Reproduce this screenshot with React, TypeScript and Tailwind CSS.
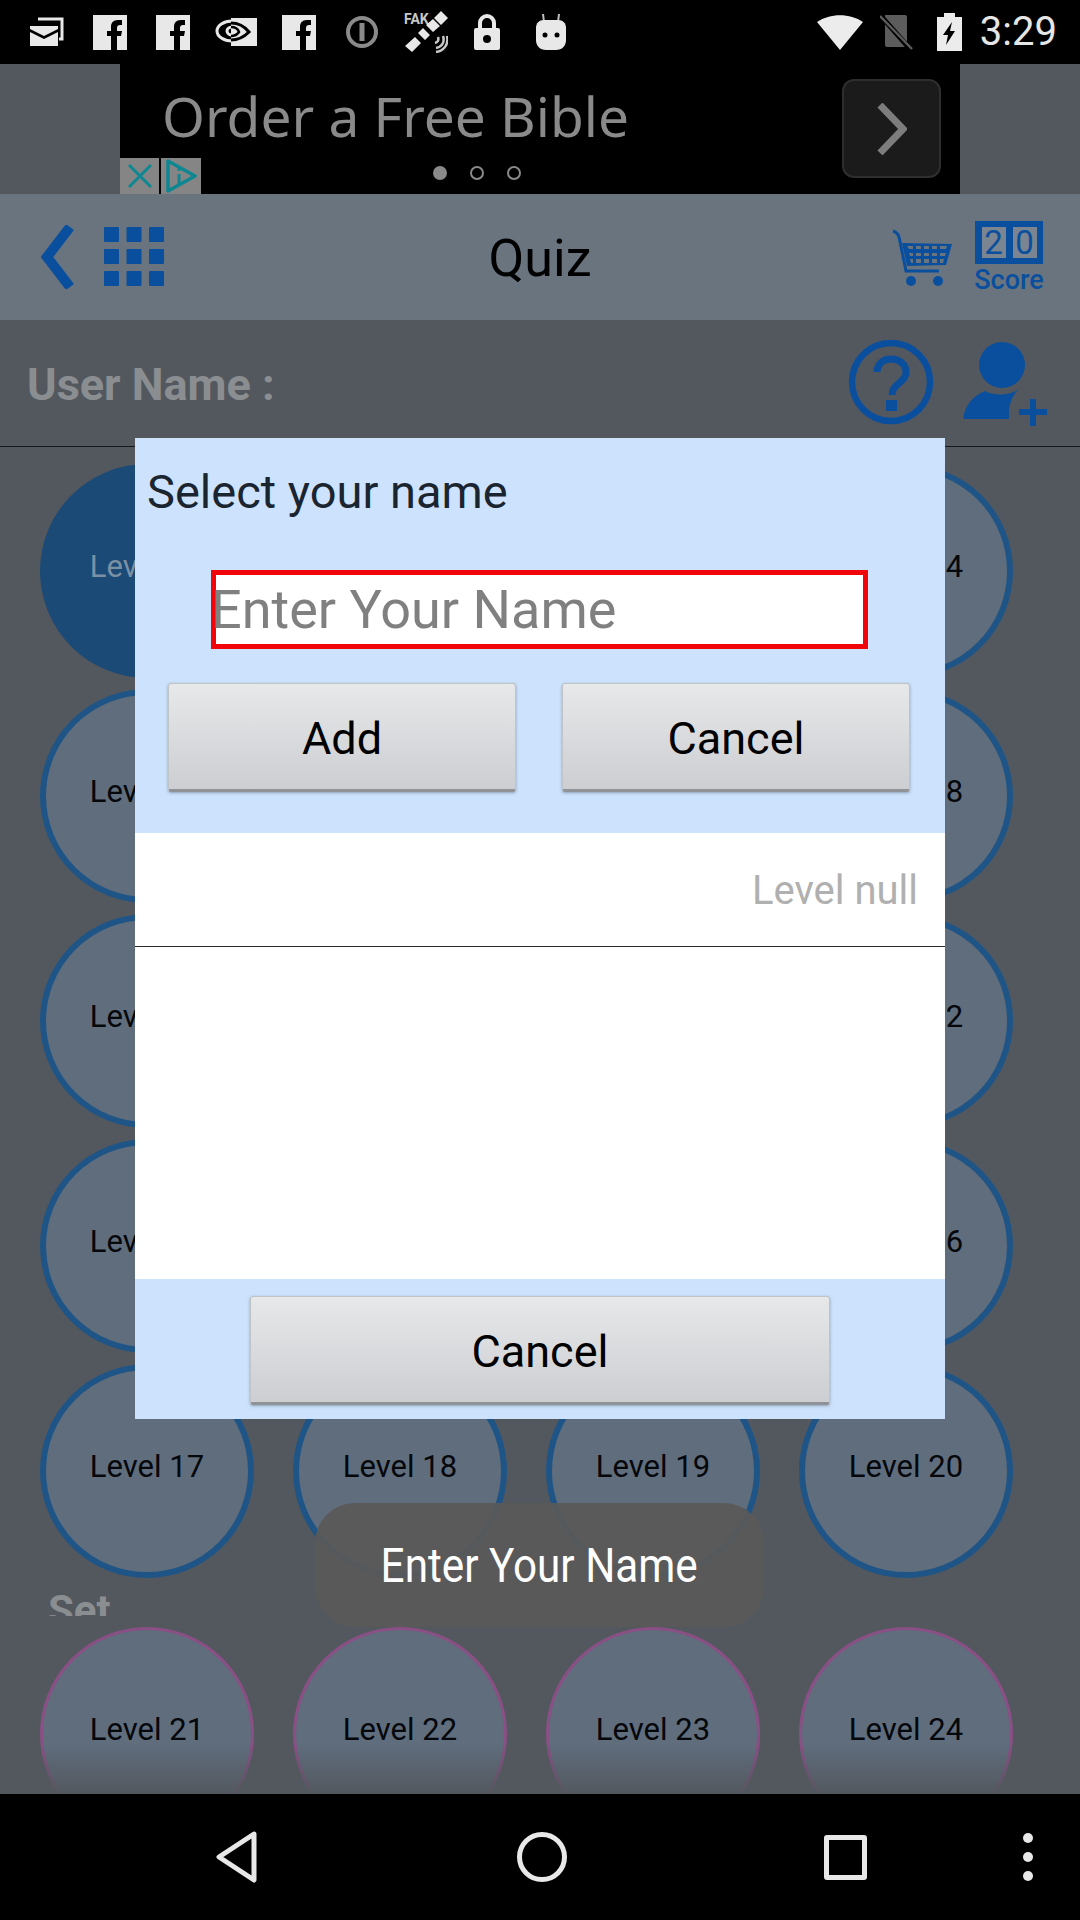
const LEVELS = [
  [1, 2, 3, 4],
  [5, 6, 7, 8],
  [9, 10, 11, 12],
  [13, 14, 15, 16],
  [17, 18, 19, 20],
];
const LAST_SET = [21, 22, 23, 24];

function Fb() {
  return (
    <svg width="34" height="35" viewBox="0 0 34 35">
      <path fill="#e8e8e8" fillRule="evenodd" d="M0 0h34v35H0zM24 35V21h4l1-5h-5v-3c0-2 1-3 3-3h2V5h-4c-5 0-7 3-7 7v4h-4v5h4v14z" />
    </svg>
  );
}

function StatusLeft() {
  return (
    <div className="flex items-center h-16 pl-[30px]">
      <svg width="34" height="30" viewBox="0 0 34 30" className="mt-[-2px]">
        <path fill="none" stroke="#e8e8e8" strokeWidth="3" d="M8 3h24v20h-3" />
        <path fill="#e8e8e8" d="M0 10h28v3L14 20 0 13zM0 16l14 7 14-7v14H0z" />
      </svg>
      <div className="ml-[29px] flex"><Fb /></div>
      <div className="ml-[29px] flex"><Fb /></div>
      <svg width="42" height="28" viewBox="0 0 42 28" className="ml-[25px]">
        <path fill="#e8e8e8" d="M16 0h26v28H16z" />
        <ellipse cx="17" cy="13" rx="15" ry="10" fill="none" stroke="#e8e8e8" strokeWidth="3" />
        <path fill="none" stroke="#000" strokeWidth="3" d="M16 5c8 0 14 4 18 9-4 4-10 8-18 8" />
        <ellipse cx="17" cy="13" rx="5" ry="4" fill="none" stroke="#e8e8e8" strokeWidth="3" />
        <path fill="none" stroke="#000" strokeWidth="2.5" d="M16 9c4 0 7 2 8 5-2 3-5 4-8 4" />
      </svg>
      <div className="ml-[25px] flex"><Fb /></div>
      <svg width="32" height="32" viewBox="0 0 32 32" className="ml-[30px]">
        <circle cx="16" cy="16" r="14" fill="none" stroke="#8a8a8a" strokeWidth="4" />
        <rect x="13.5" y="7" width="5" height="18" fill="#8a8a8a" />
      </svg>
      <svg width="44" height="42" viewBox="0 0 44 42" className="ml-[26px]">
        <text x="0" y="13" fontSize="14" fontWeight="700" fill="#c8c8c8" fontFamily="Roboto, sans-serif">FAK</text>
        <path fill="#e8e8e8" d="M37 0l7 7-7 7-7-7zM22 14l7-6 7 7-7 6zM19 17l7 7-5 5-7-7zM11 26l6 6-9 9-7-6z" />
        <path fill="none" stroke="#c8c8c8" strokeWidth="2.5" d="M34 26c1 3 0 5-3 6M39 25c2 6-1 11-7 12M43 25c2 8-3 15-11 16" />
      </svg>
      <svg width="26" height="36" viewBox="0 0 26 36" className="ml-[26px]">
        <path fill="none" stroke="#e8e8e8" strokeWidth="4" d="M6 15V9a7 7 0 0 1 14 0v6" />
        <path fill="#e8e8e8" fillRule="evenodd" d="M2 14h22a2 2 0 0 1 2 2v18a2 2 0 0 1-2 2H2a2 2 0 0 1-2-2V16a2 2 0 0 1 2-2zm11 7a4 4 0 1 0 0 8 4 4 0 0 0 0-8z" />
      </svg>
      <svg width="30" height="36" viewBox="0 0 30 36" className="ml-[36px]">
        <path stroke="#bdbdbd" strokeWidth="2" d="M7 0l1 8M23 0l-1 8" />
        <path fill="#e8e8e8" d="M8 6h14c5 0 8 3 8 8v12c0 6-4 10-10 10h-10C4 36 0 32 0 26V14c0-5 3-8 8-8z" />
        <circle cx="9" cy="21" r="2.5" fill="#000" />
        <circle cx="21" cy="21" r="2.5" fill="#000" />
      </svg>
    </div>
  );
}

function StatusRight() {
  return (
    <div className="flex items-center h-16 pr-[23px]">
      <svg width="46" height="35" viewBox="0 0 46 35">
        <path fill="#ececec" d="M0 7C13-2 33-2 46 7L23 35z" />
      </svg>
      <svg width="33" height="36" viewBox="0 0 33 36" className="ml-[17px]">
        <path fill="#5c5c5c" d="M5 1h20a2 2 0 0 1 2 2v28a2 2 0 0 1-2 2H7a2 2 0 0 1-2-2z" />
        <path stroke="#000" strokeWidth="5" d="M0 1l30 34" />
        <path stroke="#5c5c5c" strokeWidth="2.5" d="M0 2l32 33" />
      </svg>
      <svg width="25" height="38" viewBox="0 0 25 38" className="ml-[24px]">
        <path fill="#ececec" fillRule="evenodd" d="M7 0h11v4h7v34H0V4h7zM15 9L6 22h5l-2 10 9-14h-5z" />
      </svg>
      <span className="ml-[18px] text-[40px] leading-none text-[#e6e6e6]">3:29</span>
    </div>
  );
}

function AdBanner() {
  return (
    <div className="h-[130px] flex justify-center">
      <div className="w-[840px] bg-black relative flex items-center pl-[42px]">
        <span className="font-['Noto_Sans',sans-serif] text-[55px] text-[#8a8a8a] leading-none mt-[-28px]">Order a Free Bible</span>
        <div className="absolute left-[722px] top-[15px] w-[99px] h-[99px] rounded-xl bg-[#1b1b1b] border-2 border-[#2e2e2e] flex items-center justify-center">
          <svg width="30" height="52" viewBox="0 0 30 52">
            <path fill="none" stroke="#7d7d7d" strokeWidth="7" d="M3 2l23 24L3 50" />
          </svg>
        </div>
        <div className="absolute left-[313px] top-[102px] flex gap-[23px]">
          <span className="w-[14px] h-[14px] rounded-full bg-[#8a8a8a]" />
          <span className="w-[14px] h-[14px] rounded-full border-2 border-[#8a8a8a]" />
          <span className="w-[14px] h-[14px] rounded-full border-2 border-[#8a8a8a]" />
        </div>
        <div className="absolute left-0 bottom-0 h-[36px] w-[81px] flex bg-black gap-[2px]">
          <div className="w-[39px] bg-[#858585] flex items-center justify-center">
            <svg width="26" height="26" viewBox="0 0 26 26">
              <path fill="none" stroke="#0d8791" strokeWidth="3" d="M2 2l22 22M24 2L2 24" />
            </svg>
          </div>
          <div className="flex-1 bg-[#858585] flex items-center justify-center">
            <svg width="32" height="34" viewBox="0 0 32 34">
              <path fill="none" stroke="#0d8791" strokeWidth="3.5" strokeLinejoin="round" d="M3 2l27 15L3 32z" />
              <path fill="none" stroke="#0d8791" strokeWidth="3" d="M14 15v11M14 9v3" />
            </svg>
          </div>
        </div>
      </div>
    </div>
  );
}

function TitleBar() {
  return (
    <div className="h-[126px] bg-[#69747f] flex items-center pl-[41px] pr-[37px]">
      <svg width="33" height="64" viewBox="0 0 33 64">
        <path fill="none" stroke="#0a4f9e" strokeWidth="10" d="M29 2L6 32l23 30" />
      </svg>
      <svg width="60" height="60" viewBox="0 0 60 60" className="ml-[30px]">
        {[0, 22.5, 45].map((x) =>
          [0, 22, 44].map((y) => <rect key={`${x}-${y}`} x={x} y={y} width="15" height="15" rx="1" fill="#0a4f9e" />)
        )}
      </svg>
      <span className="flex-1 text-center text-[52px] leading-none text-black ml-[24px] mt-[3px]">Quiz</span>
      <svg width="60" height="58" viewBox="0 0 60 58" className="mt-[1px]">
        <path fill="none" stroke="#0a4f9e" strokeWidth="3" d="M1 2c4 1 5 3 6 6l7 34h33" />
        <path fill="#0a4f9e" fillRule="evenodd" d="M10 14l50 1-6 21-39 1zm5 3l2 3h4v-3zm9 0v3h5v-3zm8 0v3h5v-3zm8 0v3h5v-3zm8 0v3h6l1-3zM17 24l1 3h3v-3zm7 0v3h5v-3zm8 0v3h5v-3zm8 0v3h5v-3zm8 0v3h5l1-3zM18 30l1 4h2v-4zm6 0v4h5v-4zm8 0v4h5v-4zm8 0v4h5v-4zm8 0v4h3l1-4z" />
        <circle cx="19" cy="52" r="5" fill="#0a4f9e" />
        <circle cx="46" cy="52" r="5" fill="#0a4f9e" />
      </svg>
      <div className="ml-[23px] w-[68px] flex flex-col items-center">
        <div className="w-[68px] h-[43px] bg-[#0a4f9e] flex justify-center items-center gap-[7px]">
          <span className="w-[24px] h-[31px] bg-[#7a8591] text-[#0a4f9e] text-[33px] leading-[31px] text-center">2</span>
          <span className="w-[24px] h-[31px] bg-[#7a8591] text-[#0a4f9e] text-[33px] leading-[31px] text-center">0</span>
        </div>
        <span className="text-[27px] leading-[26px] mt-[3px] font-medium text-[#0a4f9e]">Score</span>
      </div>
    </div>
  );
}

function UserRow() {
  return (
    <div className="h-[127px] border-b border-[#16181b] flex items-center pl-[27px] pr-[33px]">
      <span className="flex-1 text-[45px] leading-none font-bold text-[#8b8e91] mt-[2px]">User Name :</span>
      <svg width="86" height="88" viewBox="0 0 86 88" className="mb-[2px]">
        <circle cx="43" cy="44" r="39" fill="none" stroke="#0a4f9e" strokeWidth="6.5" />
        <path fill="none" stroke="#0a4f9e" strokeWidth="7" d="M29 34c0-8 6-13 14-13s15 5 15 13c0 11-14 11-14 23" />
        <rect x="38" y="62" width="11" height="11" fill="#0a4f9e" />
      </svg>
      <svg width="84" height="86" viewBox="0 0 84 86" className="ml-[29px]">
        <circle cx="39" cy="25" r="23" fill="#0a4f9e" />
        <path fill="#0a4f9e" d="M0 79c2-16 12-24 22-28 8 5 24 5 34-2-6 6-11 14-10 30z" />
        <path stroke="#0a4f9e" strokeWidth="6" d="M56 72h28M70 59v27" />
      </svg>
    </div>
  );
}

function Circle({ n, pink, active }: { n: number; pink?: boolean; active?: boolean }) {
  const ring = pink
    ? "border-[3px] border-[#8a4f85] bg-[#5f6d7d]"
    : active
      ? "bg-[#1a4a75]"
      : "border-[6px] border-[#1f5586] bg-[#5f6d7d]";
  return (
    <div className={`w-[214px] h-[214px] rounded-full flex items-center justify-center ${ring}`}>
      <span className={`text-[31px] leading-none mb-[10px] ${active ? "text-[#7c90a4]" : "text-[#05070b]"}`}>
        Level {String(n).padStart(2, "0")}
      </span>
    </div>
  );
}

function LevelGrid() {
  return (
    <div className="relative flex-1 overflow-hidden pt-[17px] pl-[40px]">
      <div className="flex flex-col gap-[11px]">
        {LEVELS.map((row, i) => (
          <div key={i} className="flex gap-[39px]">
            {row.map((n) => <Circle key={n} n={n} active={n === 1} />)}
          </div>
        ))}
      </div>
      <div className="h-[23px] mt-[15px] ml-[8px] overflow-hidden">
        <span className="block text-[42px] leading-[36px] font-bold text-[#8b8e91]">Set</span>
      </div>
      <div className="flex gap-[39px] mt-[11px]">
        {LAST_SET.map((n) => <Circle key={n} n={n} pink />)}
      </div>
      <div className="absolute left-0 right-0 bottom-0 h-[50px] bg-gradient-to-b from-transparent to-[#53585f]" />
    </div>
  );
}

function GrayButton({ label, className }: { label: string; className: string }) {
  return (
    <button className={`h-[109px] rounded-[3px] bg-gradient-to-b from-[#e7e8ea] to-[#cdced1] border border-[#c0c3c8] border-b-[3px] border-b-[#8f9296] shadow-[0_1px_3px_rgba(80,90,110,0.5)] text-black text-[45px] leading-none pt-[3px] ${className}`}>
      {label}
    </button>
  );
}

function NameDialog() {
  return (
    <div className="absolute left-[135px] top-[438px] w-[810px] h-[981px] flex flex-col bg-[#cde3fd]">
      <div className="h-[395px] flex flex-col">
        <div className="pl-[12px] pt-[23px] text-[47px] leading-[62px] text-[#1b2530]">Select your name</div>
        <div className="mt-[47px] ml-[76px] w-[657px] h-[79px] border-[5px] border-[#f0060a] bg-white flex items-center text-[54px] leading-none text-[#808080]">
          <span className="ml-[-5px] mt-[1px]">Enter Your Name</span>
        </div>
        <div className="mt-[34px] ml-[33px] flex gap-[46px]">
          <GrayButton label="Add" className="w-[348px]" />
          <GrayButton label="Cancel" className="w-[348px]" />
        </div>
      </div>
      <div className="flex-1 bg-white">
        <div className="h-[114px] border-b border-[#2b2b2b] flex items-center justify-end pr-[27px] text-[40px] text-[#b0b0b0]">
          <span className="mt-[2px]">Level null</span>
        </div>
      </div>
      <div className="h-[140px] flex justify-center pt-[17px]">
        <GrayButton label="Cancel" className="w-[580px]" />
      </div>
    </div>
  );
}

function NavBar() {
  return (
    <div className="h-[126px] bg-black flex items-center text-[#e8e8e8] relative">
      <svg width="44" height="52" viewBox="0 0 44 52" className="ml-[215px]">
        <path fill="none" stroke="#e8e8e8" strokeWidth="5" strokeLinejoin="round" d="M39 3L4 26l35 23z" />
      </svg>
      <span className="ml-[258px] w-[50px] h-[50px] rounded-full border-[5px] border-[#e8e8e8]" />
      <span className="ml-[257px] w-[43px] h-[45px] rounded-[3px] border-[5px] border-[#e8e8e8]" />
      <div className="ml-[156px] flex flex-col gap-[9px]">
        <span className="w-[10px] h-[10px] rounded-full bg-[#e8e8e8]" />
        <span className="w-[10px] h-[10px] rounded-full bg-[#e8e8e8]" />
        <span className="w-[10px] h-[10px] rounded-full bg-[#e8e8e8]" />
      </div>
    </div>
  );
}

export default function App() {
  return (
    <div className="relative w-[1080px] h-[1920px] overflow-hidden flex flex-col bg-[#53585f] font-[Roboto,sans-serif]">
      <div className="flex justify-between bg-black">
        <StatusLeft />
        <StatusRight />
      </div>
      <AdBanner />
      <TitleBar />
      <UserRow />
      <LevelGrid />
      <NavBar />
      <NameDialog />
      {/* toast */}
      <div className="absolute left-[315px] top-[1503px] w-[449px] h-[124px] rounded-[40px] bg-[#5a5a5a]/95 flex items-center justify-center text-white text-[48px] leading-none">
        <span className="scale-x-[0.88] whitespace-nowrap mt-[2px]">Enter Your Name</span>
      </div>
    </div>
  );
}
